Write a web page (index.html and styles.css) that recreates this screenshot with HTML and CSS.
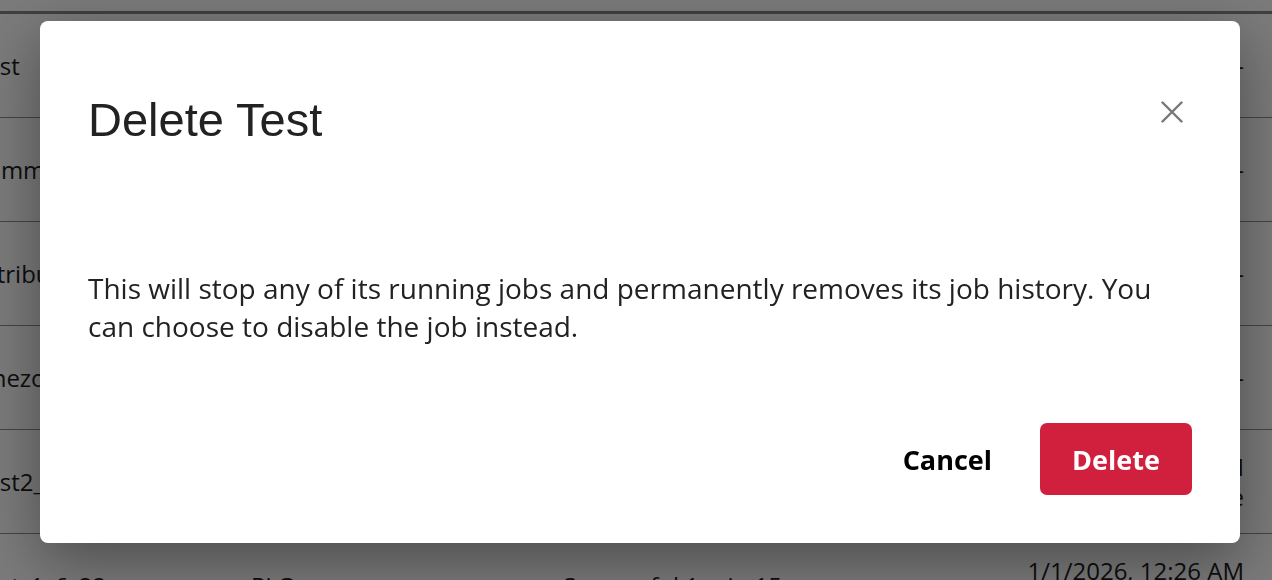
FILE: index.html
```html
<!DOCTYPE html>
<html lang="en">
<head>
  <meta charset="UTF-8" />
  <meta name="viewport" content="width=device-width, initial-scale=1.0" />
  <title>Jobs - Delete Test</title>
  <link rel="stylesheet" href="styles.css">
</head>
<body>
  <div class="jobs">
    <div class="job-row">
      <span class="job-name">Test</span>
      <span class="job-owner">Pi Org</span>
      <span class="job-status"><i class="dot"></i>Successful 2 min 4s</span>
      <span class="job-date">-</span>
    </div>
    <div class="job-row">
      <span class="job-name">Summary</span>
      <span class="job-owner">Pi Org</span>
      <span class="job-status"><i class="dot"></i>Successful 1 min 2s</span>
      <span class="job-date">-</span>
    </div>
    <div class="job-row">
      <span class="job-name">Attribution</span>
      <span class="job-owner">Pi Org</span>
      <span class="job-status"><i class="dot"></i>Successful 48s</span>
      <span class="job-date">-</span>
    </div>
    <div class="job-row">
      <span class="job-name">Onezone</span>
      <span class="job-owner">Pi Org</span>
      <span class="job-status"><i class="dot"></i>Successful 33s</span>
      <span class="job-date">-</span>
    </div>
    <div class="job-row">
      <span class="job-name">Test2_copy</span>
      <span class="job-owner">Pi Org</span>
      <span class="job-status"><i class="dot"></i>Successful 1 min 9s</span>
      <span class="job-date">1/2/2026, 9:00 AM<br>Runs once</span>
    </div>
    <div class="job-row">
      <span class="job-name">Test_1_6_22</span>
      <span class="job-owner">Pi Org</span>
      <span class="job-status"><i class="dot"></i>Successful 1 min 15s</span>
      <span class="job-date">1/1/2026, 12:26 AM<br>Runs once</span>
    </div>
  </div>

  <div class="overlay">
    <div class="dialog" role="dialog" aria-labelledby="dialogTitle">
      <div class="dialog-header">
        <h2 id="dialogTitle">Delete Test</h2>
        <button type="button" class="close-btn" aria-label="Close">
          <svg width="22" height="22" viewBox="0 0 22 22" fill="none" stroke="#767676" stroke-width="2.4" stroke-linecap="round">
            <path d="M1.5 1.5 L20.5 20.5 M20.5 1.5 L1.5 20.5" />
          </svg>
        </button>
      </div>

      <p class="dialog-body">This will stop any of its running jobs and permanently removes its job history. You can choose to disable the job instead.</p>

      <div class="dialog-footer">
        <button type="button" class="btn-cancel">Cancel</button>
        <button type="button" class="btn-delete">Delete</button>
      </div>
    </div>
  </div>
</body>
</html>
```

FILE: styles.css
```css
body {
  margin: 0;
  font-family: 'Open Sans', sans-serif;
  background-color: #ffffff;
  color: #222;
  height: 100vh;
  overflow: hidden;
}

/* job table behind the dialog, scrolled a little to the right */
.jobs {
  margin-left: -27px;
  padding-top: 11px;
}

.jobs::before {
  content: "";
  display: block;
  height: 3px;
  background-color: #858585;
}

.job-row {
  display: grid;
  grid-template-columns: 278px 288px 1fr 260px;
  align-items: center;
  height: 103px;
  border-bottom: 1px solid #8e8e8e;
  padding-right: 28px;
  font-size: 24px;
  line-height: 30px;
  color: #1c1c1c;
  white-space: nowrap;
}

.job-status {
  display: flex;
  align-items: center;
}

.dot {
  width: 8px;
  height: 8px;
  border-radius: 50%;
  background-color: #2e9e5b;
  margin-right: 16px;
}

.job-date {
  text-align: right;
}

/* dialog */
.overlay {
  position: fixed;
  inset: 0;
  background-color: rgba(0, 0, 0, 0.52);
  display: flex;
  align-items: flex-start;
  padding: 21px 0 0 40px;
}

.dialog {
  width: 1200px;
  box-sizing: border-box;
  padding: 48px;
  background-color: #fff;
  border-radius: 8px;
  box-shadow: 0 18px 60px rgba(0, 0, 0, 0.38);
}

.dialog-header {
  display: flex;
  justify-content: space-between;
  align-items: flex-start;
  padding-top: 24px;
}

.dialog-header h2 {
  margin: 0;
  font-family: 'Liberation Sans', Arial, sans-serif;
  font-size: 47px;
  font-weight: normal;
  line-height: 53px;
  color: #222;
}

.close-btn {
  width: 40px;
  height: 40px;
  margin-top: -1px;
  padding: 0;
  border: none;
  background: none;
  display: flex;
  align-items: center;
  justify-content: center;
  cursor: pointer;
}

.dialog-body {
  margin: 123px 0 0;
  font-size: 28px;
  line-height: 38px;
  color: #222;
}

.dialog-footer {
  display: flex;
  justify-content: flex-end;
  align-items: center;
  gap: 24px;
  margin-top: 78px;
}

.dialog-footer button {
  font-family: 'Open Sans', sans-serif;
  font-size: 27px;
  font-weight: bold;
  height: 72px;
  border: none;
  cursor: pointer;
}

.btn-cancel {
  background: none;
  color: #000;
  padding: 0 24px;
}

.btn-delete {
  width: 152px;
  border-radius: 7px;
  background-color: #d0203d;
  color: #fff;
}
```
